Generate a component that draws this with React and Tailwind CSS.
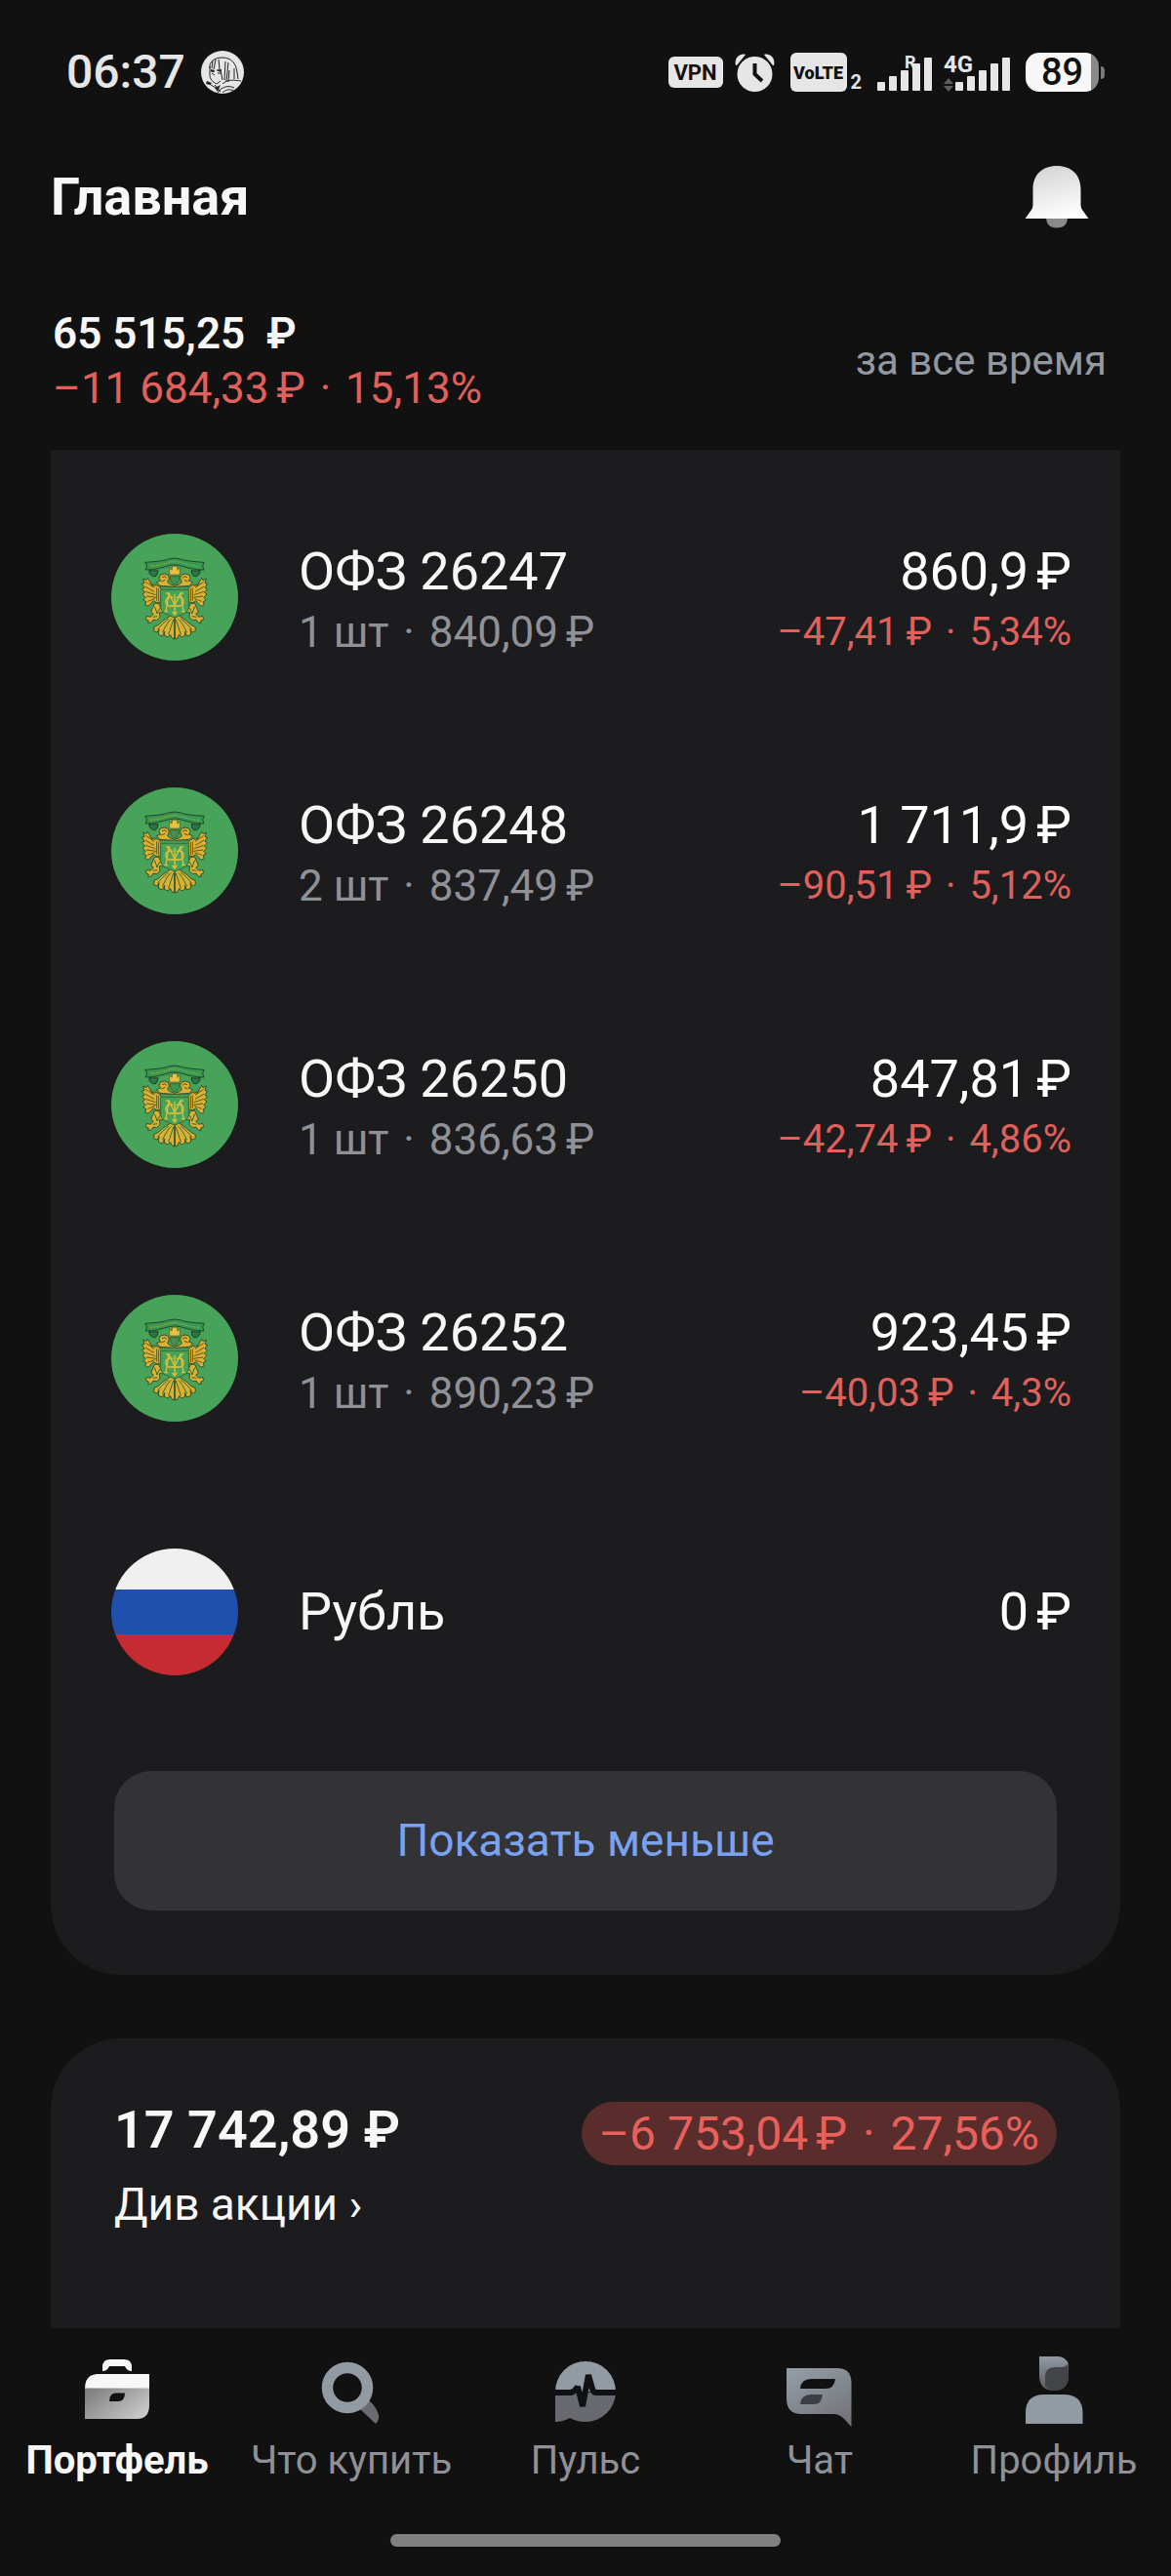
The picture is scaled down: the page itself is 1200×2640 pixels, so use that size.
import React from "react";

const bonds = [
  {
    id: 1,
    name: "ОФЗ 26247",
    count: "1 шт",
    price: "840,09",
    value: "860,9",
    change: "–47,41",
    percent: "5,34%",
  },
  {
    id: 2,
    name: "ОФЗ 26248",
    count: "2 шт",
    price: "837,49",
    value: "1 711,9",
    change: "–90,51",
    percent: "5,12%",
  },
  {
    id: 3,
    name: "ОФЗ 26250",
    count: "1 шт",
    price: "836,63",
    value: "847,81",
    change: "–42,74",
    percent: "4,86%",
  },
  {
    id: 4,
    name: "ОФЗ 26252",
    count: "1 шт",
    price: "890,23",
    value: "923,45",
    change: "–40,03",
    percent: "4,3%",
  },
];

const Rub = ({ amount }) => (
  <>
    {amount}
    <span className="ml-2">₽</span>
  </>
);

const Dot = () => <span className="mx-1"> · </span>;

const SignalBars = () => (
  <svg width="56" height="36" viewBox="0 0 56 36" fill="#e6e6e6">
    <rect x="0" y="26" width="8" height="9" rx="1" />
    <rect x="12" y="20" width="8" height="15" rx="1" />
    <rect x="24" y="14" width="8" height="21" rx="1" />
    <rect x="36" y="7" width="8" height="28" rx="1" />
    <rect x="48" y="1" width="8" height="34" rx="1" />
  </svg>
);

const AlarmIcon = () => (
  <svg width="41" height="40" viewBox="0 0 41 40">
    <path d="M1 13C-1 6 5 0 11 2L2 13Z" fill="#e6e6e6" />
    <path d="M40 13C42 6 36 0 30 2L39 13Z" fill="#e6e6e6" />
    <circle cx="20.5" cy="22" r="18" fill="#e6e6e6" />
    <path
      d="M20.5 11V22L28 29"
      fill="none"
      stroke="#111111"
      strokeWidth="4"
    />
  </svg>
);

const NotificationAvatar = () => (
  <svg width="44" height="44" viewBox="0 0 44 44">
    <clipPath id="avatarClip">
      <circle cx="22" cy="22" r="22" />
    </clipPath>
    <g clipPath="url(#avatarClip)">
      <rect width="44" height="44" fill="#e6e6e6" />
      <g fill="none" stroke="#222222" strokeWidth="1">
        <path d="M9 18C8 11 14 7 22 7C31 7 36 13 37 22L38 29" />
        <path d="M9 16V25C9 29 12 32 16 34L20 31" />
        <path d="M12 10L11 18M15 9L13 19M18 9L19 19M25 11L24 30" />
        <path d="M28 12L26 31M34 18L34 29M29 20L28 32M20 20L22 30" />
        <path d="M10 21H14M16 20H21M11 23L14 25M17 23H20" />
        <path d="M22 34C27 29 34 30 41 31M17 43C21 37 28 35 34 38M22 43C26 39 31 39 35 42" />
        <path d="M7 33L15 38M14 35L20 42" />
      </g>
      <path d="M6 31L11 33L9 35L5 34ZM14 38L20 35L17 42Z" fill="#222222" />
      <path d="M10 19L14 20L13 22L10 21ZM16 20L21 19L20 22Z" fill="#222222" />
    </g>
  </svg>
);

const BellIcon = () => (
  <svg width="66" height="64" viewBox="0 0 66 64">
    <defs>
      <linearGradient id="bellFill" x1="0.3" y1="0" x2="0.6" y2="1">
        <stop offset="0" stopColor="#d4d4d4" />
        <stop offset="1" stopColor="#ffffff" />
      </linearGradient>
    </defs>
    <path d="M22 52H44C44 59 41 63.5 33 63.5C25 63.5 22 59 22 52Z" fill="#8a8a8a" />
    <path
      d="M0.5 54L7 45Q8.5 42.5 8.5 40V24C8.5 9 18 0 33 0C48 0 57.5 9 57.5 24V40Q57.5 42.5 59 45L65.5 54Z"
      fill="url(#bellFill)"
    />
  </svg>
);

// one wing + head, mirrored for the second half
const EmblemHalf = () => (
  <>
    <path
      d="M264 243L222 240L211 229L224 224L219 217L222 207L235 203L247 207L250 217L245 229L254 236L264 238Z"
      fill="#dcb033"
      stroke="#23402a"
      strokeWidth="2.5"
    />
    <path
      d="M218 241L206 236L198 240L184 216L180 223L170 218L174 232L166 234L174 246L166 250L176 260L168 266L178 276L170 284L180 289L176 298L186 303L202 286L212 292L224 290L226 250Z"
      fill="#dcb033"
      stroke="#23402a"
      strokeWidth="2.5"
      strokeLinejoin="round"
    />
    <path
      d="M178 228L204 246M176 242L204 258M178 258L208 268M180 272L210 276M184 288L206 280M190 230L208 242M212 246V286M218 248V288"
      fill="none"
      stroke="#5a5a24"
      strokeWidth="3"
    />
    <path
      d="M218 294L205 294L200 306L194 320L202 327L192 336L181 333L178 343L187 347L185 355L195 353L201 344L212 346L222 336L220 322L232 322L224 308Z"
      fill="#dcb033"
      stroke="#23402a"
      strokeWidth="2.5"
      strokeLinejoin="round"
    />
    <path
      d="M266 336L254 332L242 340L229 349L216 361L204 366L203 379L214 383L219 373L217 390L229 395L236 381L235 393L246 398L253 390L258 400L266 404Z"
      fill="#dcb033"
      stroke="#23402a"
      strokeWidth="2.5"
      strokeLinejoin="round"
    />
    <path
      d="M263 344C258 360 254 372 248 390M256 342C246 352 238 364 230 384M248 342C236 350 224 362 214 375M205 304L214 326M222 308L212 326M200 336L214 334"
      fill="none"
      stroke="#2c6b37"
      strokeWidth="3"
    />
    <path
      d="M188 190L196 194L216 193L214 203L208 211L200 211L190 203Z"
      fill="#276b3d"
      stroke="#183a22"
      strokeWidth="2.5"
    />
    <path d="M194 199L212 199M198 206L208 205" stroke="#3f9a53" strokeWidth="2" />
    <path d="M228 214L238 211L243 217M226 227L238 222" fill="none" stroke="#4b5a25" strokeWidth="3" />
  </>
);

const MinfinLogo = () => (
  <svg className="h-[130px] w-[130px] shrink-0" viewBox="72 80 390 390">
    <circle cx="267" cy="275" r="195" fill="#47a35a" />
    <EmblemHalf />
    <g transform="matrix(-1 0 0 1 534 0)">
      <EmblemHalf />
    </g>
    {/* crown and ribbon */}
    <path
      d="M176 168C204 166 232 164 248 158Q267 152 286 158C302 164 330 166 358 168L353 179L357 191C330 192 304 184 284 178Q267 173 250 178C230 184 204 192 177 191L182 179Z"
      fill="#3b9650"
      stroke="#1b4a2a"
      strokeWidth="3"
    />
    <path
      d="M192 180C216 178 236 173 250 168Q267 163 284 168C298 173 318 178 342 180"
      fill="none"
      stroke="#8fae45"
      strokeWidth="4"
      strokeDasharray="3 3"
    />
    <path
      d="M250 183L258 192L260 180H274L276 192L284 183L282 206H252Z"
      fill="#ecc23c"
      stroke="#4b5a25"
      strokeWidth="2"
    />
    <path d="M252 211H282L279 226L267 236L255 226Z" fill="#3b9650" stroke="#5a5a24" strokeWidth="3" />
    <path d="M220 244H314" stroke="#4b5a25" strokeWidth="3" strokeDasharray="4 3" />
    {/* shield with the monogram */}
    <path
      d="M224 252H310V308Q308 324 284 331L267 339L250 331Q226 324 224 308Z"
      fill="#47a35a"
      stroke="#376d32"
      strokeWidth="3"
    />
    <g fill="none" stroke="#dfbf3d" strokeWidth="4">
      <path d="M240 263H249L267 300L285 263H294M249 263L240 319M285 263L294 319M235 319H246M288 319H299" />
      <path d="M262 276C232 268 232 308 262 302M272 276C302 268 302 308 272 302" />
      <path d="M267 266V328M260 320L267 329L274 320M256 302H278" />
    </g>
  </svg>
);

const RubleFlag = () => (
  <svg className="h-[130px] w-[130px] shrink-0" viewBox="0 0 130 130">
    <clipPath id="flagClip">
      <circle cx="65" cy="65" r="65" />
    </clipPath>
    <g clipPath="url(#flagClip)">
      <rect width="130" height="42" fill="#f0f0f0" />
      <rect y="42" width="130" height="46" fill="#2050ae" />
      <rect y="88" width="130" height="42" fill="#c62b31" />
    </g>
  </svg>
);

const PortfolioIcon = () => (
  <svg width="80" height="80" viewBox="0 0 80 80">
    <defs>
      <linearGradient id="caseFill" x1="0" y1="0.2" x2="1" y2="0.8">
        <stop offset="0" stopColor="#808080" />
        <stop offset="1" stopColor="#cbcbcb" />
      </linearGradient>
    </defs>
    <path d="M25 20V16Q25 8 33 8H47Q55 8 55 16V20Q50 20 48 15H32Q30 20 25 20Z" fill="#f7f7f8" />
    <path d="M7 38Q7 23 21 23H73V38Z" fill="#f7f7f8" />
    <path d="M7 37.5H73V55Q73 69 60 69H7Z" fill="url(#caseFill)" />
    <path d="M32 51Q32 42.5 39 42.5H48Q48 51 41 51Z" fill="#111111" />
  </svg>
);

const SearchIcon = () => (
  <svg width="80" height="80" viewBox="0 0 80 80">
    <path d="M48 58L58 50Q66 57 68 65Q69 70 65 74Z" fill="#6b6c72" />
    <circle cx="36" cy="37" r="20.5" fill="none" stroke="#929aa4" strokeWidth="11.5" />
  </svg>
);

const PulseIcon = () => (
  <svg width="80" height="80" viewBox="0 0 80 80">
    <path d="M9 42H71A31 31 0 0 1 40 72Q31 72 24 68Q17 72 9 72Z" fill="#696a6f" />
    <path d="M9 41A31 31 0 0 1 71 41Z" fill="#929aa4" />
    <path
      d="M9 42H25Q29 41 32 36L37 56L43 24L47 38Q48 42 51 42H72"
      fill="none"
      stroke="#0f1114"
      strokeWidth="6"
      strokeLinejoin="bevel"
    />
  </svg>
);

const ChatIcon = () => (
  <svg width="80" height="80" viewBox="0 0 80 80">
    <defs>
      <linearGradient id="chatFill" x1="0.2" y1="0" x2="0.8" y2="1">
        <stop offset="0" stopColor="#939ba5" />
        <stop offset="1" stopColor="#727378" />
      </linearGradient>
    </defs>
    <path
      d="M6 17H58Q72.5 17 72.5 32V77L65 69Q60 64 54 64H21Q6 64 6 48Z"
      fill="url(#chatFill)"
    />
    <path d="M20 38Q21 28 31 28H56Q55 38 46 38Z" fill="#111111" />
    <path d="M20 54Q21 44 31 44H43Q42 54 34 54Z" fill="#3c4044" />
  </svg>
);

const ProfileIcon = () => (
  <svg width="80" height="80" viewBox="0 0 80 80">
    <defs>
      <linearGradient id="hairFill" x1="0.2" y1="0" x2="0.2" y2="1">
        <stop offset="0" stopColor="#929aa4" />
        <stop offset="1" stopColor="#58595c" />
      </linearGradient>
    </defs>
    <path d="M25 5H44Q52 5 55 13V24Q55 40 40 40Q25 40 25 24Z" fill="url(#hairFill)" />
    <path d="M31 35V26Q31 16 41 16H47Q53 16 54.5 12L55 24Q55 40 40 40Q34 40 31 35Z" fill="#424448" />
    <path d="M11 74V63Q11 44 30 44H50Q69.5 44 69.5 63V74Z" fill="#929aa4" />
  </svg>
);

const tabs = [
  { id: "portfolio", label: "Портфель", icon: PortfolioIcon, active: true },
  { id: "buy", label: "Что купить", icon: SearchIcon },
  { id: "pulse", label: "Пульс", icon: PulseIcon },
  { id: "chat", label: "Чат", icon: ChatIcon },
  { id: "profile", label: "Профиль", icon: ProfileIcon },
];

const StatusBar = () => (
  <div className="flex h-[148px] items-center justify-between px-[68px]">
    <div className="flex items-center gap-4">
      <span className="text-[48px] leading-[60px] font-medium text-[#e6e6e6]">06:37</span>
      <NotificationAvatar />
    </div>
    <div className="flex h-10 items-end">
      <span className="mb-1 flex h-8 w-14 items-center justify-center rounded-md bg-[#e6e6e6] text-[22px] font-bold text-[#111111]">
        VPN
      </span>
      <span className="ml-3">
        <AlarmIcon />
      </span>
      <span className="ml-4 flex h-10 w-[58px] items-center justify-center rounded-md bg-[#e6e6e6] text-[18px] font-black text-[#111111]">
        VoLTE
      </span>
      <span className="ml-1 text-[20px] leading-5 font-bold text-[#e6e6e6]">2</span>
      <span className="relative ml-4">
        <SignalBars />
        <span className="absolute -top-1 left-7 text-[18px] leading-5 font-bold text-[#e6e6e6]">
          R
        </span>
      </span>
      <span className="relative ml-6">
        <SignalBars />
        <span className="absolute -top-1 -left-3 text-[24px] leading-6 font-bold text-[#e6e6e6]">
          4G
        </span>
        <svg className="absolute bottom-0 -left-3" width="10" height="14" viewBox="0 0 10 14" fill="#5c5c5c">
          <path d="M5 0L10 6H0ZM5 14L0 8H10Z" />
        </svg>
      </span>
      <span className="ml-4 flex items-center gap-[2px]">
        <span className="flex h-10 w-[75px] items-center justify-center rounded-[14px] bg-linear-to-r from-[#f7f7f7] from-90% to-[#8a8a8a] to-90% text-[38px] leading-10 font-medium text-[#111111]">
          89
        </span>
        <span className="h-[13px] w-1 rounded-r-full bg-[#777777]" />
      </span>
    </div>
  </div>
);

const App = () => {
  return (
    <div className="min-h-screen bg-[#111111] font-['Roboto','Noto_Sans',sans-serif] text-[#f7f7f8]">
      <StatusBar />

      <header className="flex h-[108px] items-center justify-between pr-[84px] pl-[52px]">
        <h1 className="text-[54px] leading-[72px] font-bold">Главная</h1>
        <button type="button" aria-label="Уведомления">
          <BellIcon />
        </button>
      </header>

      {/* Portfolio total */}
      <section className="mt-[58px] flex items-center justify-between pr-[66px] pl-[54px] leading-[56px]">
        <div className="text-[44px]">
          <p className="font-semibold">65 515,25{"\u00a0\u00a0"}₽</p>
          <p className="text-[#e0605b]">
            <Rub amount="–11 684,33" />
            <Dot />
            15,13%
          </p>
        </div>
        <p className="text-[42px] text-[#9299a2]">за все время</p>
      </section>

      <main className="px-[52px]">
        <section className="mt-[35px] rounded-b-[72px] bg-[#1c1c1e] pt-[21px] pb-[66px]">
          <ul>
            {bonds.map((b) => (
              <li key={b.id} className="flex h-[260px] items-center pr-[50px] pl-[62px]">
                <MinfinLogo />
                <div className="ml-[62px]">
                  <p className="text-[54px] leading-[72px]">{b.name}</p>
                  <p className="text-[44px] leading-[52px] text-[#8f9196]">
                    {b.count}
                    <Dot />
                    <Rub amount={b.price} />
                  </p>
                </div>
                <div className="ml-auto text-right">
                  <p className="text-[54px] leading-[72px] text-white">
                    <Rub amount={b.value} />
                  </p>
                  <p className="text-[40px] leading-[52px] text-[#e0605b]">
                    <Rub amount={b.change} />
                    <Dot />
                    {b.percent}
                  </p>
                </div>
              </li>
            ))}
            <li className="flex h-[260px] items-center pr-[50px] pl-[62px]">
              <RubleFlag />
              <p className="ml-[62px] text-[54px] leading-[72px]">Рубль</p>
              <p className="ml-auto text-[54px] leading-[72px] text-white">
                <Rub amount="0" />
              </p>
            </li>
          </ul>
          <div className="mt-[33px] px-[65px]">
            <button
              type="button"
              className="h-[143px] w-full rounded-[38px] bg-[#333335] text-[46px] text-[#7aa2f0]"
            >
              Показать меньше
            </button>
          </div>
        </section>

        <section className="mt-[65px] rounded-t-[72px] bg-[#1c1c1e] px-[65px] pt-[58px] pb-[97px]">
          <div className="flex items-end justify-between">
            <p className="text-[54px] leading-[72px] font-semibold">17 742,89 ₽</p>
            <p className="rounded-full bg-[#5a2d2d] px-[18px] text-[48px] leading-[65px] text-[#e8605b]">
              <Rub amount="–6 753,04" />
              <Dot />
              27,56%
            </p>
          </div>
          <a href="#" className="mt-[10px] block text-[46px] leading-[60px]">
            Див акции ›
          </a>
        </section>
      </main>

      <nav className="grid grid-cols-5 pt-6">
        {tabs.map(({ id, label, icon: Icon, active }) => (
          <button
            key={id}
            type="button"
            className={
              active
                ? "flex flex-col items-center text-[40px] leading-[64px] font-bold whitespace-nowrap text-[#f7f7f8]"
                : "flex flex-col items-center text-[40px] leading-[64px] whitespace-nowrap text-[#8f9196]"
            }
          >
            <Icon />
            {label}
          </button>
        ))}
      </nav>
      <div className="mx-auto mt-[43px] mb-[30px] h-[13px] w-1/3 rounded-full bg-[#808080]" />
    </div>
  );
};

export default App;
